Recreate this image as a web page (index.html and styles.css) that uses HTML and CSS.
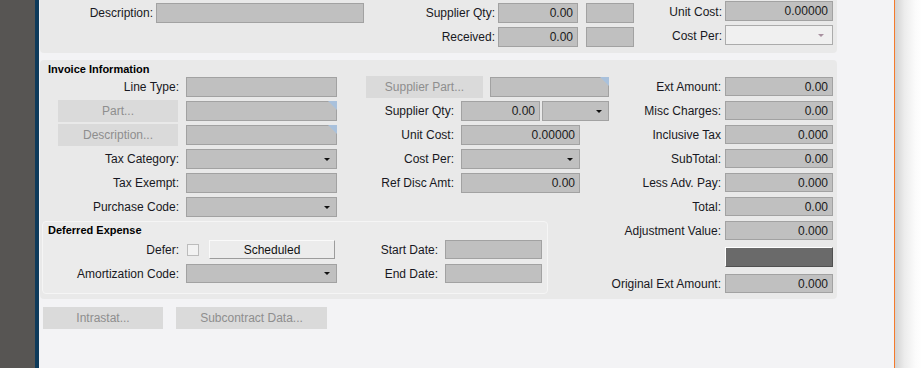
FILE: index.html
```html
<!DOCTYPE html>
<html lang="en">

<head>
    <meta charset="UTF-8">
    <meta name="viewport" content="width=device-width, initial-scale=1.0">
    <title>Invoice Line</title>
    <link rel="stylesheet" href="styles.css">
</head>

<body>
    <div class="frame">
        <div class="gutter"></div>
        <div class="window">

            <div class="panel top-panel">
                <div class="lbl">Description:</div>
                <div class="fld"></div>
                <div class="lbl">Supplier Qty:</div>
                <div class="fld num">0.00</div>
                <div class="fld small"></div>
                <div class="lbl up">Unit Cost:</div>
                <div class="fld num up">0.00000</div>

                <div></div>
                <div></div>
                <div class="lbl">Received:</div>
                <div class="fld num">0.00</div>
                <div class="fld small"></div>
                <div class="lbl up">Cost Per:</div>
                <div class="fld dd light up"></div>
            </div>

            <div class="panel invoice">
                <div class="sec-title">Invoice Information</div>
                <div class="inv-body">
                    <div class="inv-left">
                        <div class="inv-grid">
                            <div class="lbl">Line Type:</div>
                            <div class="fld"></div>
                            <div class="pair">
                                <div class="btn btn-supp">Supplier Part...</div>
                                <div class="fld corner w119"></div>
                            </div>

                            <div class="btn btn-side">Part...</div>
                            <div class="fld corner"></div>
                            <div class="lbl">Supplier Qty:</div>
                            <div class="qty">
                                <div class="fld num w79">0.00</div>
                                <div class="fld dd w67"></div>
                            </div>

                            <div class="btn btn-side">Description...</div>
                            <div class="fld corner"></div>
                            <div class="lbl">Unit Cost:</div>
                            <div class="fld num w119">0.00000</div>

                            <div class="lbl">Tax Category:</div>
                            <div class="fld dd"></div>
                            <div class="lbl">Cost Per:</div>
                            <div class="fld dd w119"></div>

                            <div class="lbl">Tax Exempt:</div>
                            <div class="fld"></div>
                            <div class="lbl">Ref Disc Amt:</div>
                            <div class="fld num w119">0.00</div>

                            <div class="lbl">Purchase Code:</div>
                            <div class="fld dd"></div>
                        </div>

                        <div class="deferred">
                            <div class="sec-title">Deferred Expense</div>
                            <div class="def-grid">
                                <div class="lbl">Defer:</div>
                                <div class="defer">
                                    <div class="check"></div>
                                    <div class="push">Scheduled</div>
                                </div>
                                <div class="lbl">Start Date:</div>
                                <div class="fld"></div>

                                <div class="lbl">Amortization Code:</div>
                                <div class="fld dd"></div>
                                <div class="lbl">End Date:</div>
                                <div class="fld"></div>
                            </div>
                        </div>
                    </div>

                    <div class="inv-right">
                        <div class="row"><div class="lbl">Ext Amount:</div><div class="fld num">0.00</div></div>
                        <div class="row"><div class="lbl">Misc Charges:</div><div class="fld num">0.00</div></div>
                        <div class="row"><div class="lbl">Inclusive Tax</div><div class="fld num">0.000</div></div>
                        <div class="row"><div class="lbl">SubTotal:</div><div class="fld num">0.00</div></div>
                        <div class="row"><div class="lbl">Less Adv. Pay:</div><div class="fld num">0.000</div></div>
                        <div class="row"><div class="lbl">Total:</div><div class="fld num">0.00</div></div>
                        <div class="row"><div class="lbl">Adjustment Value:</div><div class="fld num">0.000</div></div>
                        <div class="bar"></div>
                        <div class="row"><div class="lbl">Original Ext Amount:</div><div class="fld num">0.000</div></div>
                    </div>
                </div>
            </div>

            <div class="bottom-btns">
                <div class="btn btn-intra">Intrastat...</div>
                <div class="btn btn-sub">Subcontract Data...</div>
            </div>

        </div>
        <div class="edge"></div>
    </div>
</body>

</html>
```

FILE: styles.css
```css
* {
    box-sizing: border-box;
}

body {
    margin: 0;
    font-family: "Liberation Sans", Arial, sans-serif;
    font-size: 12px;
    color: #181822;
    background: #fff;
}

.frame {
    display: flex;
    height: 368px;
    overflow: hidden;
}

.gutter {
    width: 35px;
    background: #575553;
}

.window {
    width: 860px;
    border-left: 4px solid #0e3a5a;
    border-right: 1px solid #f47a2c;
    background: #f3f3f5;
    padding-left: 1px;
}

.edge {
    flex: 1;
    background: linear-gradient(to right, #d2d2d2, #ececec 35%, #fbfbfb 75%, #fff);
}

.panel {
    width: 797px;
    background: #e9e9e9;
    border-radius: 4px;
}

/* labels and fields */
.lbl {
    display: flex;
    align-items: center;
    justify-content: flex-end;
    padding-right: 3px;
    white-space: nowrap;
}

.fld {
    height: 19px;
    background: #c0c0c0;
    border: 1px solid #a2a2a2;
    display: flex;
    align-items: center;
    justify-content: flex-end;
    padding-right: 4px;
    color: #1a1a1a;
}

.fld.dd::after {
    content: "";
    border-left: 3px solid transparent;
    border-right: 3px solid transparent;
    border-top: 3px solid #111;
    margin-right: 2px;
}

.fld.light {
    background: #f0f0f0;
    border-color: #ababab;
}

.fld.light::after {
    border-top-color: #a8909f;
    margin-right: 4px;
}

/* lookup marker in the top right corner */
.fld.corner {
    position: relative;
}

.fld.corner::after {
    content: "";
    position: absolute;
    top: -1px;
    right: -1px;
    border-left: 9px solid transparent;
    border-top: 9px solid #a9c1dc;
}

.btn {
    height: 22px;
    background: #dadada;
    color: #8e8e8e;
    display: flex;
    align-items: center;
    justify-content: center;
}

/* top panel */
.top-panel {
    border-radius: 0 0 4px 4px;
    display: grid;
    grid-template-columns: 116px 208px 134px 80px 56px 91px 108px;
    grid-template-rows: 19px 19px;
    row-gap: 5px;
    padding: 3px 0 7px;
}

.top-panel .fld {
    height: 20px;
}

.top-panel .small {
    margin-left: 8px;
}

.top-panel .up {
    margin-top: -2px;
}

/* invoice panel */
.invoice {
    margin-top: 7px;
    padding-top: 2px;
}

.sec-title {
    font-size: 11px;
    font-weight: bold;
    line-height: 14px;
    color: #000;
    padding-left: 8px;
    margin-bottom: 1px;
}

.inv-body {
    display: flex;
}

.inv-left {
    width: 569px;
}

.inv-grid {
    display: grid;
    grid-template-columns: 134px 151px 116px 148px;
    grid-auto-rows: 20px;
    gap: 4px;
    margin-left: 8px;
}

.inv-grid .fld {
    height: 20px;
}

.pair {
    grid-column: span 2;
    display: flex;
    justify-content: flex-end;
    align-items: center;
    gap: 7px;
}

.btn-supp {
    width: 117px;
}

.btn-side {
    width: 120px;
    justify-self: end;
    align-self: center;
    margin-right: 4px;
}

.qty {
    display: flex;
    gap: 2px;
}

.w119 {
    width: 119px;
}

.w79 {
    width: 79px;
}

.w67 {
    width: 67px;
}

.deferred {
    width: 506px;
    margin: 4px 0 0 2px;
    background: #ebebeb;
    border: 1px solid #f5f5f5;
    border-radius: 4px;
    padding: 1px 0 10px 5px;
}

.deferred .sec-title {
    padding-left: 0;
    margin-bottom: 3px;
}

.def-grid {
    display: grid;
    grid-template-columns: 134px 151px 100px 97px;
    grid-auto-rows: 19px;
    column-gap: 4px;
    row-gap: 5px;
}

.defer {
    display: flex;
    align-items: center;
}

.check {
    width: 12px;
    height: 12px;
    margin-left: 1px;
    background: #f2f2f2;
    border: 1px solid #bcbcbc;
}

.push {
    width: 126px;
    height: 19px;
    margin-left: 10px;
    background: #ececec;
    border-top: 1px solid #fafafa;
    border-left: 1px solid #fafafa;
    border-right: 1px solid #9c9c9c;
    border-bottom: 1px solid #9c9c9c;
    display: flex;
    align-items: center;
    justify-content: center;
    color: #111;
}

.inv-right {
    width: 224px;
    display: flex;
    flex-direction: column;
    gap: 5px;
    padding-bottom: 6px;
}

.inv-right .row {
    display: flex;
    height: 19px;
}

.inv-right .lbl {
    flex: 1;
    padding-right: 4px;
}

.inv-right .fld {
    width: 108px;
}

.bar {
    align-self: flex-end;
    width: 108px;
    height: 20px;
    margin: 2px 0;
    background: #6a6a6a;
    border-top: 1px solid #fff;
    border-left: 1px solid #fff;
    border-right: 1px solid #505050;
    border-bottom: 1px solid #505050;
}

/* bottom buttons */
.bottom-btns {
    display: flex;
    gap: 13px;
    margin: 8px 0 0 3px;
}

.btn-intra {
    width: 120px;
}

.btn-sub {
    width: 151px;
}
```
